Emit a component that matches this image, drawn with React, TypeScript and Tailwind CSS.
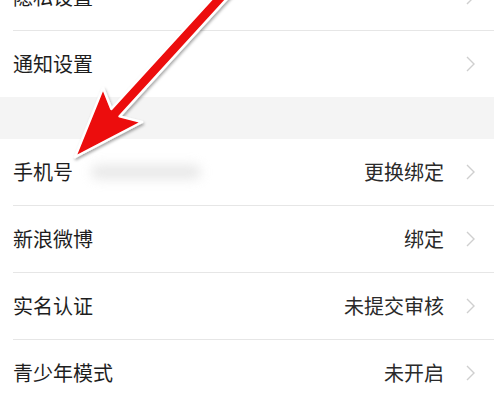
import React from "react";

function Chevron() {
  return (
    <svg width="9" height="16" viewBox="0 0 9 16" className="shrink-0">
      <polyline points="1,1 8,8 1,15" fill="none" stroke="#cfcfcf" strokeWidth="1.4" strokeLinejoin="miter" />
    </svg>
  );
}

function Row({ label, value, blur, first }: { label: string; value?: string; blur?: boolean; first?: boolean }) {
  return (
    <div className={`flex h-[66px] items-center pl-[13px] pr-[19px] ${first ? "-mt-[36px]" : ""}`}>
      <span className="text-[20px] leading-none text-[#1e1e1e]">{label}</span>
      {blur && <div className="ml-[18px] h-[14px] w-[110px] rounded-full bg-[#d8d8d8] opacity-60 blur-[6px]" />}
      <div className="flex-1" />
      {value && <span className="mr-[22px] text-[20px] leading-none text-[#2a2a2a]">{value}</span>}
      <Chevron />
    </div>
  );
}

function Divider() {
  return <div className="ml-[13px] h-px bg-[#e6e6e6]" />;
}

export default function App() {
  return (
    <div
      className="relative h-[399px] w-[494px] overflow-hidden bg-white"
      style={{ fontFamily: '"Noto Sans CJK SC", "Noto Sans", sans-serif' }}
    >
      <Row label="隐私设置" first />
      <Divider />
      <Row label="通知设置" />
      <div className="h-[42px] bg-[#f4f4f4]" />
      <Row label="手机号" value="更换绑定" blur />
      <Divider />
      <Row label="新浪微博" value="绑定" />
      <Divider />
      <Row label="实名认证" value="未提交审核" />
      <Divider />
      <Row label="青少年模式" value="未开启" />

      <svg className="pointer-events-none absolute left-0 top-0" width="494" height="399" viewBox="0 0 494 399">
        <defs>
          <filter id="sh" x="-20%" y="-20%" width="140%" height="140%">
            <feDropShadow dx="1" dy="2" stdDeviation="1.5" floodColor="#000" floodOpacity="0.35" />
          </filter>
          <linearGradient id="rg" x1="0" y1="0" x2="1" y2="0">
            <stop offset="0" stopColor="#d40000" />
            <stop offset="0.5" stopColor="#f40808" />
            <stop offset="1" stopColor="#d00000" />
          </linearGradient>
        </defs>
        <polygon
          points="75,157 103,88 111.4,109 232.9,-24.1 241.1,-16.7 119.6,116.4 142,122"
          fill="#ec0a0a"
          stroke="#ffffff"
          strokeWidth="2.5"
          strokeLinejoin="round"
          filter="url(#sh)"
        />
      </svg>
    </div>
  );
}
